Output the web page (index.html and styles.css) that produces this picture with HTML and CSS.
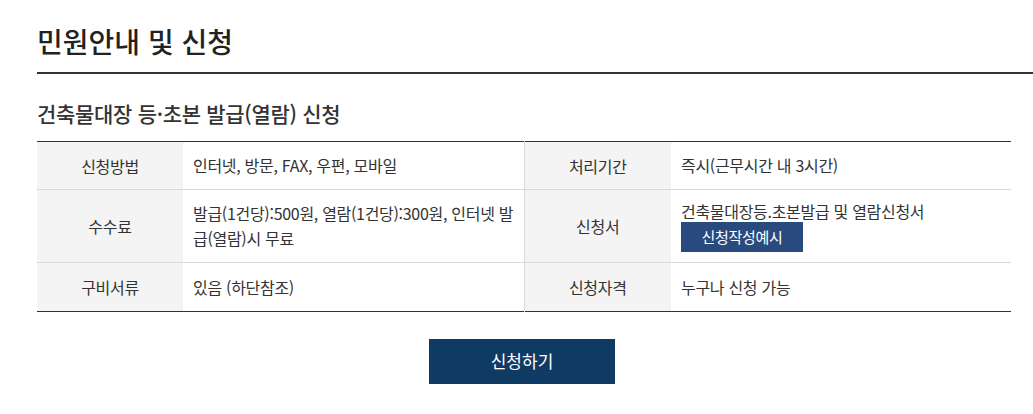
FILE: index.html
```html
<!DOCTYPE html>
<html lang="ko">
<head>
<meta charset="utf-8">
<title>민원안내 및 신청</title>
<link rel="stylesheet" href="styles.css">
</head>
<body>
<div class="page">
  <h2 class="page-title">민원안내 및 신청</h2>
  <h3 class="sub-title">건축물대장 등·초본 발급(열람) 신청</h3>
  <table class="info">
    <colgroup>
      <col class="c-th"><col class="c-td1"><col class="c-th2"><col class="c-td2">
    </colgroup>
    <tr class="r1">
      <th>신청방법</th>
      <td class="sep">인터넷, 방문, FAX, 우편, 모바일</td>
      <th>처리기간</th>
      <td>즉시(근무시간 내 3시간)</td>
    </tr>
    <tr class="r2">
      <th>수수료</th>
      <td class="sep breakall">발급(1건당):500원, 열람(1건당):300원, 인터넷 발급(열람)시 무료</td>
      <th>신청서</th>
      <td><div class="doc">건축물대장등.초본발급 및 열람신청서</div><a class="btn-sample" href="#">신청작성예시</a></td>
    </tr>
    <tr class="r3">
      <th>구비서류</th>
      <td class="sep">있음 (하단참조)</td>
      <th>신청자격</th>
      <td>누구나 신청 가능</td>
    </tr>
  </table>
  <div class="actions"><a class="btn-apply" href="#">신청하기</a></div>
</div>
</body>
</html>
```
FILE: styles.css
```css
html, body { margin: 0; padding: 0; background: #fff; }
body {
  font-family: "Noto Sans CJK KR", "Noto Sans", sans-serif;
  color: #333;
}
.page { padding-left: 37px; }
.page-title {
  margin: 0;
  padding: 21px 0 11px;
  font-size: 28px;
  font-weight: 500;
  line-height: 40px;
  color: #222;
  letter-spacing: 0;
  border-bottom: 2px solid #333;
}
.sub-title {
  margin: 0;
  padding: 24px 0 0;
  font-size: 21px;
  font-weight: 500;
  line-height: 30px;
  color: #333;
  letter-spacing: -0.3px;
}
.info {
  margin-top: 13px;
  width: 974px;
  border-collapse: collapse;
  table-layout: fixed;
  border-top: 1px solid #333;
  border-bottom: 1px solid #333;
  font-size: 16px;
  letter-spacing: -0.3px;
}
.c-th { width: 146px; }
.c-td1 { width: 341px; }
.c-th2 { width: 147px; }
.c-td2 { width: 340px; }
.info th {
  background: #f4f4f4;
  font-weight: 400;
  color: #333;
  text-align: center;
  padding: 0;
}
.info td {
  padding: 0 6px 0 10px;
  text-align: left;
  line-height: 25px;
}
.info td.breakall { word-break: break-all; }
.info tr + tr th, .info tr + tr td { border-top: 1px solid #d9d9d9; }
.info td.sep { border-right: 1px solid #d9d9d9; }
.r1 { height: 48px; }
.r2 { height: 73px; }
.r3 { height: 49px; }
.doc { line-height: 22px; }
.btn-sample {
  display: inline-block;
  width: 122px;
  height: 30px;
  line-height: 30px;
  text-align: center;
  background: #284a7e;
  color: #fff;
  text-decoration: none;
  font-size: 15px;
  margin-top: 0;
}
.actions {
  display: flex;
  justify-content: center;
  padding-top: 27px;
  width: 970px;
}
.btn-apply {
  display: block;
  width: 186px;
  height: 45px;
  line-height: 44px;
  text-align: center;
  background: #0f3a63;
  color: #fff;
  text-decoration: none;
  font-size: 17px;
}
```
